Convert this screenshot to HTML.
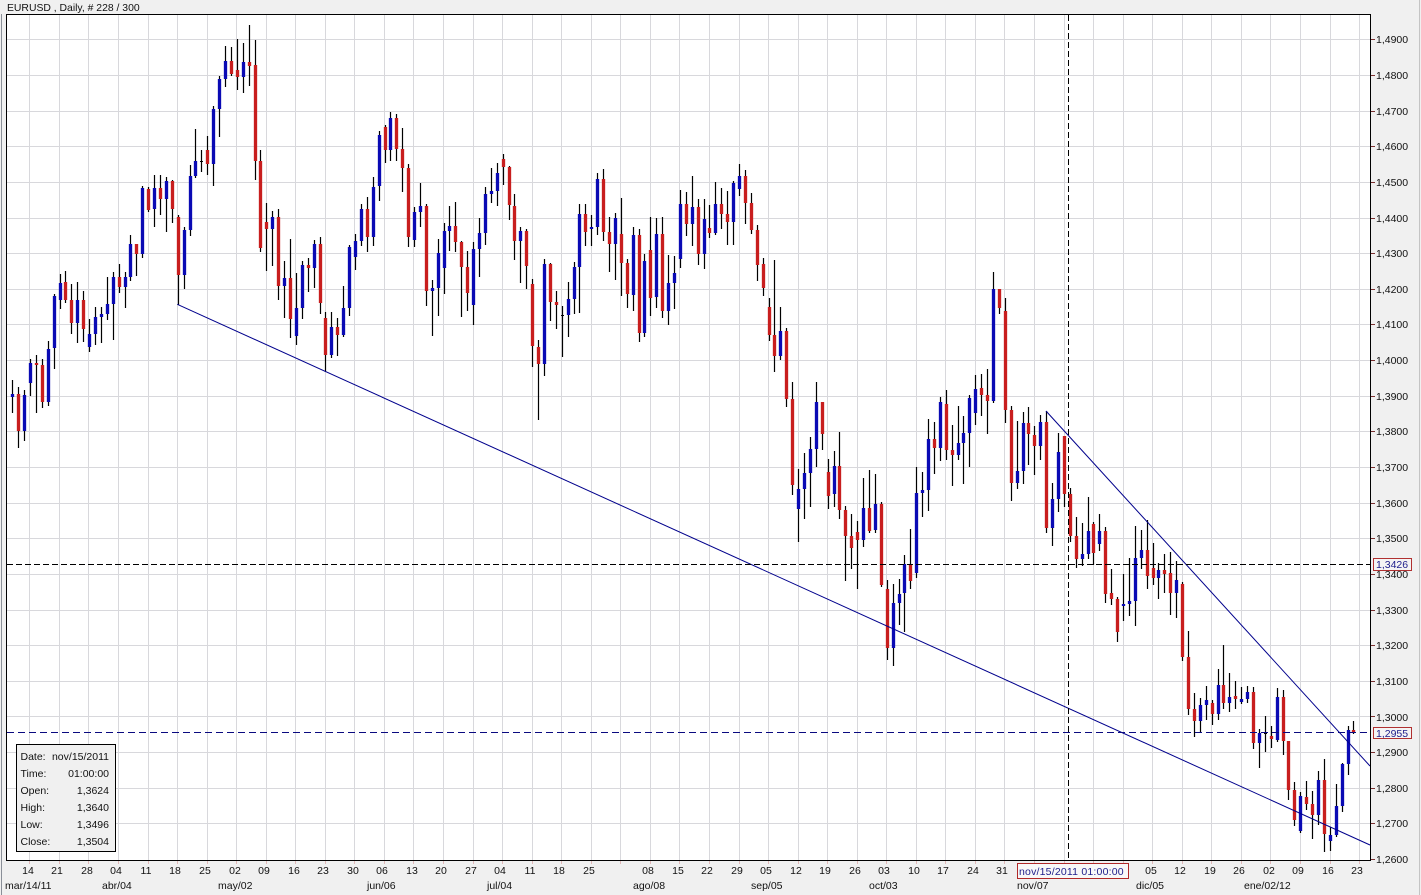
<!DOCTYPE html>
<html>
<head>
<meta charset="utf-8">
<title>EURUSD</title>
<style>
html,body{margin:0;padding:0;background:#f0f0f0;width:1421px;height:895px;overflow:hidden}
svg{display:block;position:absolute;left:0;top:0}
text{font-family:"Liberation Sans",Arial,sans-serif;font-size:10.5px;fill:#111}
</style>
</head>
<body>
<svg id="s" width="1421" height="895" viewBox="0 0 1421 895" xmlns="http://www.w3.org/2000/svg" shape-rendering="crispEdges">
<rect x="0" y="0" width="1421" height="895" fill="#f0f0f0"/>
<rect x="1" y="14" width="1" height="881" fill="#8a8f98"/>
<rect x="1419" y="0" width="1" height="895" fill="#c4c4c4"/>
<rect x="6" y="14" width="1364" height="846" fill="#ffffff"/>
<g id="grid"></g>
<g id="wicks"></g>
<g id="bodies"></g>
<g shape-rendering="geometricPrecision" fill="none" stroke-width="1">
<path d="M177.3 304.3L1370 845" stroke="#00008c"/>
<path d="M1046 411L1370 766" stroke="#00008c"/>
</g>
<path d="M7 564.5H1370" stroke="#000" stroke-width="1" stroke-dasharray="6 3" fill="none"/>
<path d="M7 732.5H1370" stroke="#0a0a80" stroke-width="1" stroke-dasharray="7 4" fill="none"/>
<path d="M1068.5 15V860" stroke="#000" stroke-width="1" stroke-dasharray="6 3" fill="none"/>
<rect x="6.5" y="14.5" width="1364" height="846" fill="none" stroke="#000" stroke-width="1"/>
<g id="ticks"></g>

<text x="7" y="11" style="font-size:10.4px">EURUSD , Daily, # 228 / 300</text>

<g>
<text x="1376" y="43">1,4900</text>
<text x="1376" y="79">1,4800</text>
<text x="1376" y="115">1,4700</text>
<text x="1376" y="150">1,4600</text>
<text x="1376" y="186">1,4500</text>
<text x="1376" y="222">1,4400</text>
<text x="1376" y="257">1,4300</text>
<text x="1376" y="293">1,4200</text>
<text x="1376" y="328">1,4100</text>
<text x="1376" y="364">1,4000</text>
<text x="1376" y="400">1,3900</text>
<text x="1376" y="435">1,3800</text>
<text x="1376" y="471">1,3700</text>
<text x="1376" y="507">1,3600</text>
<text x="1376" y="542">1,3500</text>
<text x="1376" y="578">1,3400</text>
<text x="1376" y="614">1,3300</text>
<text x="1376" y="649">1,3200</text>
<text x="1376" y="685">1,3100</text>
<text x="1376" y="721">1,3000</text>
<text x="1376" y="756">1,2900</text>
<text x="1376" y="792">1,2800</text>
<text x="1376" y="827">1,2700</text>
<text x="1376" y="863">1,2600</text>
</g>

<rect x="1373.5" y="558.5" width="38" height="12" fill="#f4f4f4" stroke="#b03030"/>
<text x="1376" y="568" style="fill:#20208c">1,3426</text>
<rect x="1373.5" y="727.5" width="38" height="11" fill="#f4f4f4" stroke="#b03030"/>
<text x="1376" y="737" style="fill:#20208c">1,2955</text>

<g text-anchor="middle">
<text x="28" y="874">14</text><text x="57" y="874">21</text><text x="87" y="874">28</text><text x="116" y="874">04</text>
<text x="146" y="874">11</text><text x="175" y="874">18</text><text x="205" y="874">25</text><text x="235" y="874">02</text>
<text x="264" y="874">09</text><text x="294" y="874">16</text><text x="323" y="874">23</text><text x="353" y="874">30</text>
<text x="382" y="874">06</text><text x="412" y="874">13</text><text x="441" y="874">20</text><text x="471" y="874">27</text>
<text x="500" y="874">04</text><text x="530" y="874">11</text><text x="559" y="874">18</text><text x="589" y="874">25</text>
<text x="648" y="874">08</text><text x="678" y="874">15</text><text x="707" y="874">22</text><text x="737" y="874">29</text>
<text x="766" y="874">05</text><text x="796" y="874">12</text><text x="825" y="874">19</text><text x="855" y="874">26</text>
<text x="884" y="874">03</text><text x="914" y="874">10</text><text x="943" y="874">17</text><text x="973" y="874">24</text>
<text x="1002" y="874">31</text><text x="1151" y="874">05</text><text x="1180" y="874">12</text><text x="1210" y="874">19</text>
<text x="1239" y="874">26</text><text x="1269" y="874">02</text><text x="1298" y="874">09</text><text x="1328" y="874">16</text>
<text x="1357" y="874">23</text>
</g>
<g>
<text x="5" y="889">mar/14/11</text>
<text x="102" y="889">abr/04</text>
<text x="218" y="889">may/02</text>
<text x="367" y="889">jun/06</text>
<text x="487" y="889">jul/04</text>
<text x="633" y="889">ago/08</text>
<text x="751" y="889">sep/05</text>
<text x="869" y="889">oct/03</text>
<text x="1017" y="889">nov/07</text>
<text x="1136" y="889">dic/05</text>
<text x="1244" y="889">ene/02/12</text>
</g>

<rect x="1017.5" y="863.5" width="111" height="15" fill="#f8f8f8" stroke="#b02828"/>
<text x="1019" y="875" style="fill:#20208c;font-size:10.5px;letter-spacing:.2px">nov/15/2011 01:00:00</text>

<rect x="16.5" y="744.5" width="99" height="107" fill="#f0f0f0" stroke="#000"/>
<g>
<text x="20.5" y="760">Date:</text><text x="109" y="760" text-anchor="end">nov/15/2011</text>
<text x="20.5" y="777">Time:</text><text x="109" y="777" text-anchor="end">01:00:00</text>
<text x="20.5" y="794">Open:</text><text x="109" y="794" text-anchor="end">1,3624</text>
<text x="20.5" y="811">High:</text><text x="109" y="811" text-anchor="end">1,3640</text>
<text x="20.5" y="828">Low:</text><text x="109" y="828" text-anchor="end">1,3496</text>
<text x="20.5" y="845">Close:</text><text x="109" y="845" text-anchor="end">1,3504</text>
</g>
</svg>
<script>
var d=[
['b',380,394,397,412],['r',387,394,431,447],['b',390,395,431,440],['b',359,363,383,395],['r',355,363,365,412],['r',359,365,402,407],['b',341,349,402,405],['b',294,296,348,368],['b',274,283,300,308],['r',271,282,300,302],
['r',284,300,323,333],['b',282,300,323,342],['r',291,300,329,341],['b',319,334,347,351],['b',307,317,334,344],['b',307,314,317,342],['b',277,304,314,319],['b',272,277,304,339],['r',264,277,287,292],['b',272,277,287,307],
['b',235,244,277,280],['r',244,244,254,275],['b',186,188,254,257],['r',187,189,210,211],['b',175,188,209,226],['r',175,188,199,214],['b',177,181,199,231],['r',180,181,209,222],['r',215,217,275,304],['b',227,230,275,288],
['b',165,176,230,235],['b',129,161,176,177],['k',150,161,161,171],['r',136,150,164,174],['b',106,109,164,185],['b',76,79,109,136],['b',46,61,79,86],['r',47,61,74,75],['r',39,70,77,89],['b',43,62,77,92],
['r',25,62,66,85],['r',40,65,161,179],['r',150,161,248,251],['r',203,222,229,270],['b',211,217,229,265],['r',209,217,286,299],['b',261,278,286,317],['r',239,278,319,337],['b',273,308,336,344],['b',261,265,308,318],
['r',258,265,268,291],['b',240,244,268,287],['r',237,244,303,313],['r',312,318,355,371],['b',312,327,355,357],['r',318,327,335,355],['b',286,308,335,336],['b',245,247,308,315],['b',234,241,257,269],['b',204,209,241,245],
['r',197,209,237,251],['b',177,187,237,245],['b',131,135,186,200],['r',125,127,150,162],['b',112,118,150,160],['r',114,118,149,160],['r',128,149,168,191],['r',164,168,237,246],['b',207,212,240,246],['b',183,206,212,226],
['r',204,206,291,305],['b',280,288,291,335],['b',239,253,288,315],['b',223,231,268,293],['b',206,226,231,250],['r',202,226,242,251],['r',241,242,267,316],['r',251,267,293,310],['b',242,249,305,324],['b',218,233,249,276],
['b',187,194,233,244],['b',168,191,194,202],['b',163,173,191,205],['r',154,159,167,184],['r',166,167,205,219],['r',194,206,241,259],['b',227,231,241,282],['r',229,231,266,288],['r',279,284,346,366],['r',340,347,364,419],
['b',259,264,364,375],['r',263,264,302,320],['r',291,302,305,328],['k',306,315,315,356],['b',282,299,315,336],['b',262,267,299,313],['b',204,214,267,312],['r',204,214,232,245],['b',215,227,229,245],['b',173,179,227,234],
['r',169,179,232,240],['r',217,232,244,271],['b',213,218,244,279],['r',198,234,263,295],['r',259,263,294,307],['b',227,235,295,310],['r',229,235,333,341],['b',254,261,333,336],['r',217,250,298,315],['b',218,234,297,307],
['r',217,234,311,317],['b',255,283,311,324],['b',256,273,283,308],['b',190,204,259,267],['r',192,204,224,235],['b',176,207,224,245],['r',199,207,254,264],['b',199,219,254,268],['r',205,228,233,237],['b',182,204,233,234],
['r',188,204,214,228],['r',191,214,222,244],['b',181,183,222,244],['b',164,176,189,195],['r',170,176,203,223],['r',193,203,230,233],['r',225,230,265,280],['r',258,264,288,295],['r',298,307,335,340],['r',260,335,356,371],
['b',307,331,356,359],['r',328,331,399,406],['r',382,399,485,494],['b',469,489,509,541],['b',453,473,489,518],['b',437,449,473,506],['b',382,402,449,466],['r',402,402,434,449],['r',459,472,496,508],['b',451,466,494,506],
['r',432,466,510,518],['r',506,510,536,580],['r',514,536,548,568],['r',521,532,540,588],['b',478,508,540,546],['r',470,508,531,532],['b',474,504,530,532],['r',502,504,585,586],['r',580,589,648,659],['b',584,603,648,665],
['b',579,594,603,624],['b',555,564,593,631],['r',529,564,581,588],['b',467,493,573,577],['b',472,490,493,516],['b',419,439,490,510],['r',422,439,448,473],['b',397,402,448,460],['r',390,404,450,459],['r',425,450,455,485],
['b',406,443,455,459],['b',416,433,443,483],['b',395,398,433,466],['b',375,389,413,424],['r',374,388,395,415],['r',369,395,401,433],['b',272,289,401,402],['r',289,289,308,313],['r',298,311,410,422],['r',406,410,483,500],
['b',421,471,483,488],['b',412,423,471,483],['r',407,423,434,464],['r',426,435,446,474],['b',415,422,446,459],['r',411,422,528,532],['b',483,499,528,545],['b',433,452,499,511],['r',436,436,494,506],['r',488,494,536,541],
['r',517,536,559,567],['b',523,554,559,565],['b',497,531,554,558],['r',522,524,553,564],['b',514,531,544,550],['r',527,531,594,602],['r',569,593,599,604],['r',597,599,632,641],['b',574,604,606,620],['b',558,601,604,615],
['b',526,558,601,625],['b',530,550,558,568],['r',520,550,576,588],['r',543,568,578,584],['b',563,570,578,598],['r',554,570,574,592],['r',552,573,593,614],['b',561,580,593,617],['r',582,584,657,660],['r',631,657,709,714],
['r',693,709,721,736],['b',698,705,721,732],['b',686,700,705,719],['r',700,703,714,724],['b',669,685,714,719],['r',645,685,703,708],['b',673,697,703,711],['r',681,696,699,708],['b',687,699,702,703],['b',686,692,699,702],
['r',687,692,743,748],['b',729,733,743,767],['k',716,733,733,751],['r',726,736,739,747],['b',688,697,740,741],['r',690,697,741,754],['r',741,741,790,799],['r',782,790,820,825],['b',792,796,831,832],['r',781,797,804,809],
['r',791,804,815,838],['b',771,780,815,824],['r',759,780,834,851],['b',827,835,841,850],['b',784,806,835,836],['b',763,764,806,811],['b',726,730,764,774],['r',721,730,733,733]
];
var NS='http://www.w3.org/2000/svg';
function R(p,x,y,w,h,f,o){var e=document.createElementNS(NS,'rect');e.setAttribute('x',x);e.setAttribute('y',y);e.setAttribute('width',w);e.setAttribute('height',h);e.setAttribute('fill',f);if(o)e.setAttribute('opacity',o);p.appendChild(e);}
var g=document.getElementById('grid'),t=document.getElementById('ticks'),W=document.getElementById('wicks'),B=document.getElementById('bodies');
var gc='#d8d8dc';
for(var k=0;k<=45;k++){var x=Math.round(29.3+29.55*k);R(g,x,15,1,845,gc);R(t,x,861,1,3,'#e0b8b8');}
for(var k=0;k<24;k++){var y=Math.round(39.3+35.64*k);if(k<23)R(g,7,y,1363,1,gc);R(t,1371,y,4,1,'#7a3030');}
for(var i=0;i<d.length;i++){
 var c=d[i],X=Math.round(12.3+5.908*i);
 R(W,X-1,c[1],3,c[4]-c[1]+1,'#000',0.1);
 R(W,X,c[1],1,c[4]-c[1]+1,'#000');
 if(c[0]=='k'){R(B,X-1,c[2],3,1,'#000');}
 else{
  var f=c[0]=='r'?'#c81e1e':'#0a0ab4',h=Math.max(c[3]-c[2],2);
  R(B,X-2,c[2],5,h,f,0.16);
  R(B,X-1,c[2],3,h,f);
 }
}
</script>
</body>
</html>
